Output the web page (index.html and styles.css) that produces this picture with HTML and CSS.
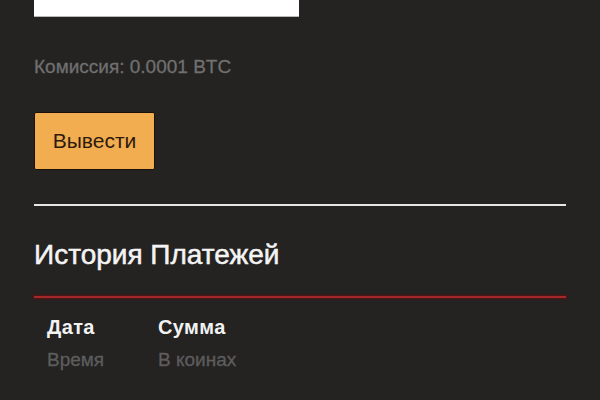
FILE: index.html
```html
<!DOCTYPE html>
<html lang="ru">
<head>
<meta charset="utf-8">
<link rel="stylesheet" href="styles.css">
</head>
<body>
<div class="page">
  <div class="field"></div>
  <p class="fee">Комиссия: 0.0001 BTC</p>
  <button class="btn">Вывести</button>
  <hr class="sep">
  <h2 class="title">История Платежей</h2>
  <hr class="sep-red">
  <div class="table">
    <div class="col col-date">
      <div class="th">Дата</div>
      <div class="sub">Время</div>
    </div>
    <div class="col">
      <div class="th">Сумма</div>
      <div class="sub">В коинах</div>
    </div>
  </div>
</div>
</body>
</html>
```

FILE: styles.css
```css
html, body {
  margin: 0;
  padding: 0;
  background: #242322;
  height: 100%;
}
body {
  font-family: "Liberation Sans", Arial, sans-serif;
}
.page {
  padding: 0 34px;
  display: flex;
  flex-direction: column;
  align-items: flex-start;
}
.field {
  width: 265px;
  height: 16px;
  background: #ffffff;
  border-bottom: 1px solid #b9b9b9;
}
.fee {
  margin: 39px 0 0 0;
  font-size: 19px;
  line-height: 22px;
  color: #707070;
  -webkit-text-stroke: 0.3px #707070;
}
.btn {
  margin-top: 34px;
  width: 121px;
  height: 58px;
  background: #f1ad4f;
  border: 1px solid #1a120a;
  border-radius: 2px;
  font-family: "Liberation Sans", Arial, sans-serif;
  font-size: 21px;
  color: #2e1a0c;
  padding: 0;
}
.sep {
  align-self: stretch;
  margin: 34px 0 0 0;
  border: 0;
  height: 2px;
  background: #e6e6e6;
}
.title {
  margin: 33px 0 0 0;
  font-size: 28px;
  line-height: 32px;
  font-weight: normal;
  color: #f4f4f4;
  -webkit-text-stroke: 0.5px #f4f4f4;
}
.sep-red {
  align-self: stretch;
  margin: 25px 0 0 0;
  border: 0;
  height: 2px;
  background: #a3282a;
  box-shadow: 0 0 2px 1px #5a1212;
}
.table {
  display: flex;
  padding: 18px 13px 0;
}
.col-date {
  width: 111px;
}
.th {
  font-size: 20px;
  line-height: 23px;
  font-weight: bold;
  letter-spacing: 0.4px;
  color: #f2f2f2;
}
.sub {
  margin-top: 10px;
  font-size: 19px;
  line-height: 22px;
  color: #5d5d5d;
  -webkit-text-stroke: 0.3px #5d5d5d;
}
```
